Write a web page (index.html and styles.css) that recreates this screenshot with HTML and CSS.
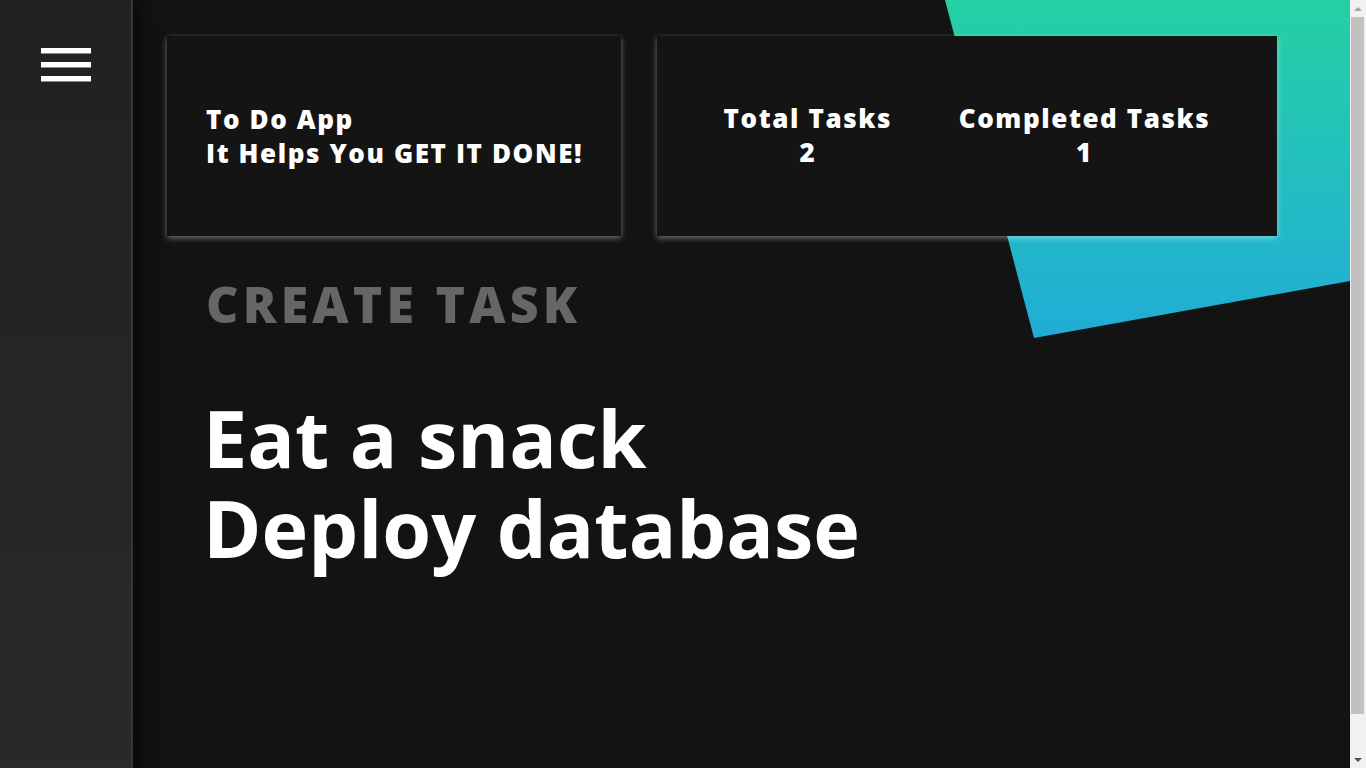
FILE: index.html
```html
<!DOCTYPE html>
<html lang="en">
<head>
<meta charset="utf-8">
<title>To Do App</title>
<link rel="stylesheet" href="styles.css">
</head>
<body>
<div class="page">
  <div class="accent"></div>
  <aside class="sidebar">
    <button class="menu" aria-label="Menu">
      <span class="bar"></span>
      <span class="bar"></span>
      <span class="bar"></span>
    </button>
  </aside>
  <main class="main">
    <section class="cards">
      <div class="card card-intro">
        <p class="intro">To Do App<br>It Helps You GET IT DONE!</p>
      </div>
      <div class="card card-stats">
        <div class="stat">
          <span class="stat-label">Total Tasks</span>
          <span class="stat-value">2</span>
        </div>
        <div class="stat">
          <span class="stat-label">Completed Tasks</span>
          <span class="stat-value">1</span>
        </div>
      </div>
    </section>
    <h2 class="create">CREATE TASK</h2>
    <ul class="tasks">
      <li class="task">Eat a snack</li>
      <li class="task">Deploy database</li>
    </ul>
  </main>
</div>
<div class="scrollbar" aria-hidden="true">
  <span class="sb-btn sb-up"><svg width="8" height="4" viewBox="0 0 8 4"><polygon points="0,4 4,0 8,4" fill="#a3a3a3"/></svg></span>
  <span class="sb-track"><span class="sb-thumb"></span></span>
  <span class="sb-btn sb-down"><svg width="8" height="4" viewBox="0 0 8 4"><polygon points="0,0 8,0 4,4" fill="#505050"/></svg></span>
</div>
</body>
</html>
```

FILE: styles.css
```css
* { box-sizing: border-box; }
html, body { margin: 0; padding: 0; }
body {
  background: #131313;
  color: #fff;
  font-family: "Open Sans", "DejaVu Sans", sans-serif;
}
.scrollbar {
  position: fixed;
  top: 0;
  right: 0;
  width: 16px;
  height: 100vh;
  background: #f1f1f1;
  display: flex;
  flex-direction: column;
  z-index: 10;
}
.sb-btn {
  flex: 0 0 17px;
  display: flex;
  align-items: center;
  justify-content: center;
}
.sb-track {
  flex: 1;
  display: flex;
  flex-direction: column;
  padding: 0 2px 0 1px;
}
.sb-thumb {
  display: block;
  height: 697px;
  background: #c1c1c1;
}
.page {
  position: relative;
  display: flex;
  min-height: 808px;
  margin-right: 16px;
  overflow: hidden;
}
.accent {
  position: absolute;
  top: 0;
  right: 0;
  width: 405px;
  height: 338px;
  background: linear-gradient(to bottom, #25d0a3 0%, #22bcc4 60%, #20acd6 100%);
  clip-path: polygon(0 0, 100% 0, 100% 281px, 89px 100%);
  z-index: 0;
}
.sidebar {
  position: relative;
  z-index: 2;
  width: 133px;
  flex: 0 0 133px;
  background: linear-gradient(to bottom, #212121, #2a2a2a);
  border-right: 2px solid #363636;
  box-shadow: 4px 0 22px rgba(0, 0, 0, 0.75);
}
.menu {
  display: flex;
  flex-direction: column;
  gap: 8px;
  margin: 48px 0 0 41px;
  padding: 0;
  background: none;
  border: 0;
}
.bar {
  display: block;
  width: 50px;
  height: 6px;
  background: #fff;
  border-bottom: 1px solid #8a8a8a;
}
.main {
  position: relative;
  z-index: 1;
  flex: 1;
  padding: 36px 0 0 34px;
}
.cards {
  display: flex;
  gap: 36px;
}
.card {
  background: #141414;
  height: 200px;
  box-shadow: 0 2px 6px rgba(255, 255, 255, 0.4);
  display: flex;
  align-items: center;
}
.card-intro {
  width: 454px;
  padding-left: 39px;
}
.intro {
  margin: 0;
  font-size: 26px;
  font-weight: 800;
  line-height: 34px;
  letter-spacing: 1.6px;
}
.card-stats {
  width: 620px;
  justify-content: space-evenly;
  padding-bottom: 2px;
}
.stat {
  display: flex;
  flex-direction: column;
  align-items: center;
  font-size: 26px;
  font-weight: 800;
  line-height: 34px;
  letter-spacing: 1.6px;
}
.create {
  margin: 38px 0 0 39px;
  font-size: 50px;
  font-weight: 800;
  line-height: 60px;
  color: #666;
  letter-spacing: 4.2px;
}
.tasks {
  list-style: none;
  margin: 59px 0 0 36px;
  padding: 0;
}
.task {
  font-size: 79px;
  font-weight: 700;
  line-height: 90px;
}
```
